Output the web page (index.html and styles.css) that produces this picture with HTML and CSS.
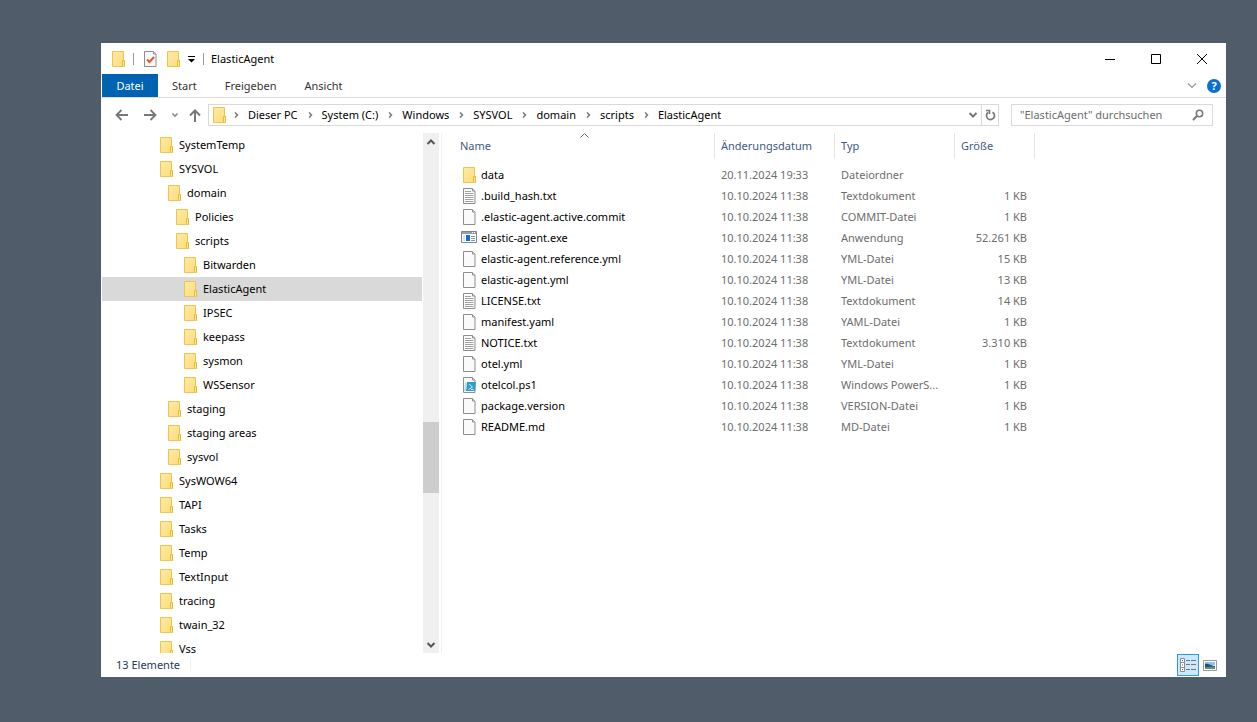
FILE: index.html
```
<!DOCTYPE html>
<html lang="de">
<head>
<meta charset="utf-8">
<title>ElasticAgent</title>
<link rel="stylesheet" href="styles.css">
</head>
<body>
<svg class="defs" aria-hidden="true">
  <linearGradient id="gold" x1="0" y1="0" x2="1" y2="1"><stop offset="0" stop-color="#ffe9a2"/><stop offset="1" stop-color="#fddc7c"/></linearGradient>
  <symbol id="folder" viewBox="0 0 13 16"><path d="M.5.5h11v9h1v6H.5z" fill="url(#gold)" stroke="#ecc54c"/><path d="M10.500 15V9.500h2v6" fill="#ffe596" stroke="#e6bb3a"/></symbol>
  <symbol id="page" viewBox="0 0 13 16"><path d="M.5.5h9l2.500 2.500v12.500H.5z" fill="#fafafa" stroke="#8e8e8e"/><path d="M9.500.5v2.500H12" fill="#e4e4e4" stroke="#8e8e8e"/></symbol>
  <symbol id="text" viewBox="0 0 13 16"><use href="#page"/><path d="M2 3.500h6M2 5.500h8.500M2 7.500h8.500M2 9.500h8.500M2 11.500h8.500M2 13.500h8.500" stroke="#a2a2a2"/></symbol>
  <symbol id="app" viewBox="0 0 16 13"><path d="M.5.5h15v11H.5z" fill="#fff" stroke="#7f858b"/><path d="M1 1h14v2H1z" fill="#9a9fa5"/><path d="M11 1.500h1m1 0h1" stroke="#fff"/><path d="M5 4h4v6H5z" fill="#0b6fd6"/><path d="M2 4h2v6H2z" fill="#dbe6f1"/><path d="M10 5.500h4M10 7.500h4M10 9.500h4" stroke="#929292"/></symbol>
  <symbol id="ps" viewBox="0 0 13 16"><use href="#page"/><path d="M4 5h9l-1 9H3z" fill="#2f9bd0"/><path d="M2 6h2l-1 8H1z" fill="#b9ddee"/><path d="m6 7 3.500 3-4 2.500M8 12.500h2.500" fill="none" stroke="#d8f0fb"/></symbol>
  <symbol id="check" viewBox="0 0 13 16"><use href="#page"/><path d="m3 8.500 2.500 2.500L10 6" fill="none" stroke="#e8562a" stroke-width="2"/></symbol>
  <symbol id="chev" viewBox="0 0 5 8"><path d="m1 1.500 2.500 2.500L1 6.500" fill="none" stroke="#777" stroke-width="1.500"/></symbol>
  <symbol id="down" viewBox="0 0 10 8"><path d="m1.500 2 3.500 3.500L8.500 2" fill="none" stroke="currentColor" stroke-width="2"/></symbol>
  <symbol id="left" viewBox="0 0 14 12"><path d="M1.500 6H13M6.500 1 1.500 6l5 5" fill="none" stroke="#777" stroke-width="1.800"/></symbol>
</svg>
<main class="window">
  <header class="titlebar">
    <svg class="ic"><use href="#folder"/></svg>
    <span class="bar"></span>
    <button class="plain" aria-label="Eigenschaften"><svg class="ic"><use href="#check"/></svg></button>
    <button class="plain" aria-label="Neuer Ordner"><svg class="ic"><use href="#folder"/></svg></button>
    <button class="plain custom" aria-label="Symbolleiste anpassen"><svg width="7" height="7" viewBox="0 0 7 7"><path d="M0 0h7v1H0zM0 3h7L3.500 6.500z"/></svg></button>
    <span class="bar"></span>
    <h1 class="title">ElasticAgent</h1>
    <div class="controls">
      <button class="plain" aria-label="Minimieren"><svg width="10" height="10"><path d="M0 5.500h10" stroke="#000"/></svg></button>
      <button class="plain" aria-label="Maximieren"><svg width="10" height="10"><path d="M.5.5h9v9h-9z" fill="none" stroke="#000"/></svg></button>
      <button class="plain" aria-label="Schließen"><svg width="10" height="10"><path d="m0 0 10 10m0-10-10 10" stroke="#000"/></svg></button>
    </div>
  </header>
  <nav class="tabs">
    <button class="tab active">Datei</button>
    <button class="tab">Start</button>
    <button class="tab">Freigeben</button>
    <button class="tab">Ansicht</button>
    <div class="help">
      <button class="plain" aria-label="Menüband erweitern"><svg width="10" height="6"><path d="m1 .5 4 4 4-4" fill="none" stroke="#999" stroke-width="1.200"/></svg></button>
      <button class="plain question" aria-label="Hilfe">?</button>
    </div>
  </nav>
  <div class="navbar">
    <div class="arrows">
      <button class="plain" aria-label="Zurück"><svg width="14" height="12"><use href="#left"/></svg></button>
      <button class="plain" aria-label="Vorwärts"><svg class="flip" width="14" height="12"><use href="#left"/></svg></button>
      <button class="plain recent" aria-label="Verlauf"><svg width="8" height="6"><use href="#down"/></svg></button>
      <button class="plain" aria-label="Nach oben"><svg width="12" height="13"><path d="M6 13V1.500M1 6.500l5-5 5 5" fill="none" stroke="#777" stroke-width="2"/></svg></button>
    </div>
    <div class="address">
      <svg class="ic"><use href="#folder"/></svg>
      <ol class="crumbs">
        <li><svg class="chev"><use href="#chev"/></svg><a href="#">Dieser PC</a></li>
        <li><svg class="chev"><use href="#chev"/></svg><a href="#">System (C:)</a></li>
        <li><svg class="chev"><use href="#chev"/></svg><a href="#">Windows</a></li>
        <li><svg class="chev"><use href="#chev"/></svg><a href="#">SYSVOL</a></li>
        <li><svg class="chev"><use href="#chev"/></svg><a href="#">domain</a></li>
        <li><svg class="chev"><use href="#chev"/></svg><a href="#">scripts</a></li>
        <li><svg class="chev"><use href="#chev"/></svg><a href="#">ElasticAgent</a></li>
      </ol>
      <button class="plain drop" aria-label="Vorherige Orte"><svg width="10" height="8"><use href="#down"/></svg></button>
      <button class="plain refresh" aria-label="Aktualisieren"><svg width="11" height="12"><path d="M7.500 3.200a4 4 0 1 1-4.500.3M1 1.500h3.500V5" fill="none" stroke="#777" stroke-width="1.700"/></svg></button>
    </div>
    <form class="search">
      <input class="query" type="search" aria-label="Suchen" placeholder="&quot;ElasticAgent&quot; durchsuchen">
      <button class="plain" type="button" aria-label="Suche starten"><svg width="12" height="12"><circle cx="7.500" cy="4.500" r="3.200" fill="none" stroke="#777" stroke-width="1.500"/><path d="M5.200 6.800 1 11" stroke="#777" stroke-width="2"/></svg></button>
    </form>
  </div>
  <div class="body">
    <ul class="tree">
      <li class="node l0"><svg class="ic"><use href="#folder"/></svg>SystemTemp</li>
      <li class="node l0"><svg class="ic"><use href="#folder"/></svg>SYSVOL</li>
      <li class="node l1"><svg class="ic"><use href="#folder"/></svg>domain</li>
      <li class="node l2"><svg class="ic"><use href="#folder"/></svg>Policies</li>
      <li class="node l2"><svg class="ic"><use href="#folder"/></svg>scripts</li>
      <li class="node l3"><svg class="ic"><use href="#folder"/></svg>Bitwarden</li>
      <li class="node l3 selected"><svg class="ic"><use href="#folder"/></svg>ElasticAgent</li>
      <li class="node l3"><svg class="ic"><use href="#folder"/></svg>IPSEC</li>
      <li class="node l3"><svg class="ic"><use href="#folder"/></svg>keepass</li>
      <li class="node l3"><svg class="ic"><use href="#folder"/></svg>sysmon</li>
      <li class="node l3"><svg class="ic"><use href="#folder"/></svg>WSSensor</li>
      <li class="node l1"><svg class="ic"><use href="#folder"/></svg>staging</li>
      <li class="node l1"><svg class="ic"><use href="#folder"/></svg>staging areas</li>
      <li class="node l1"><svg class="ic"><use href="#folder"/></svg>sysvol</li>
      <li class="node l0"><svg class="ic"><use href="#folder"/></svg>SysWOW64</li>
      <li class="node l0"><svg class="ic"><use href="#folder"/></svg>TAPI</li>
      <li class="node l0"><svg class="ic"><use href="#folder"/></svg>Tasks</li>
      <li class="node l0"><svg class="ic"><use href="#folder"/></svg>Temp</li>
      <li class="node l0"><svg class="ic"><use href="#folder"/></svg>TextInput</li>
      <li class="node l0"><svg class="ic"><use href="#folder"/></svg>tracing</li>
      <li class="node l0"><svg class="ic"><use href="#folder"/></svg>twain_32</li>
      <li class="node l0"><svg class="ic"><use href="#folder"/></svg>Vss</li>
    </ul>
    <div class="scrollbar">
      <button class="plain step" aria-label="Nach oben blättern"><svg class="turn" width="10" height="8"><use href="#down"/></svg></button>
      <div class="track"><div class="thumb"></div></div>
      <button class="plain step" aria-label="Nach unten blättern"><svg width="10" height="8"><use href="#down"/></svg></button>
    </div>
    <section class="files">
      <table class="list">
        <colgroup><col class="c-name"><col class="c-date"><col class="c-type"><col class="c-size"></colgroup>
        <thead><tr><th>Name<svg class="sort" width="9" height="5"><path d="m.5 4.500 4-4 4 4" fill="none" stroke="#666"/></svg></th><th>Änderungsdatum</th><th>Typ</th><th>Größe</th></tr></thead>
        <tbody>
          <tr><td><div class="file"><svg class="ic"><use href="#folder"/></svg>data</div></td><td>20.11.2024 19:33</td><td>Dateiordner</td><td></td></tr>
          <tr><td><div class="file"><svg class="ic"><use href="#text"/></svg>.build_hash.txt</div></td><td>10.10.2024 11:38</td><td>Textdokument</td><td>1 KB</td></tr>
          <tr><td><div class="file"><svg class="ic"><use href="#page"/></svg>.elastic-agent.active.commit</div></td><td>10.10.2024 11:38</td><td>COMMIT-Datei</td><td>1 KB</td></tr>
          <tr><td><div class="file"><svg class="ic wide"><use href="#app"/></svg>elastic-agent.exe</div></td><td>10.10.2024 11:38</td><td>Anwendung</td><td>52.261 KB</td></tr>
          <tr><td><div class="file"><svg class="ic"><use href="#page"/></svg>elastic-agent.reference.yml</div></td><td>10.10.2024 11:38</td><td>YML-Datei</td><td>15 KB</td></tr>
          <tr><td><div class="file"><svg class="ic"><use href="#page"/></svg>elastic-agent.yml</div></td><td>10.10.2024 11:38</td><td>YML-Datei</td><td>13 KB</td></tr>
          <tr><td><div class="file"><svg class="ic"><use href="#text"/></svg>LICENSE.txt</div></td><td>10.10.2024 11:38</td><td>Textdokument</td><td>14 KB</td></tr>
          <tr><td><div class="file"><svg class="ic"><use href="#page"/></svg>manifest.yaml</div></td><td>10.10.2024 11:38</td><td>YAML-Datei</td><td>1 KB</td></tr>
          <tr><td><div class="file"><svg class="ic"><use href="#text"/></svg>NOTICE.txt</div></td><td>10.10.2024 11:38</td><td>Textdokument</td><td>3.310 KB</td></tr>
          <tr><td><div class="file"><svg class="ic"><use href="#page"/></svg>otel.yml</div></td><td>10.10.2024 11:38</td><td>YML-Datei</td><td>1 KB</td></tr>
          <tr><td><div class="file"><svg class="ic"><use href="#ps"/></svg>otelcol.ps1</div></td><td>10.10.2024 11:38</td><td>Windows PowerS...</td><td>1 KB</td></tr>
          <tr><td><div class="file"><svg class="ic"><use href="#page"/></svg>package.version</div></td><td>10.10.2024 11:38</td><td>VERSION-Datei</td><td>1 KB</td></tr>
          <tr><td><div class="file"><svg class="ic"><use href="#page"/></svg>README.md</div></td><td>10.10.2024 11:38</td><td>MD-Datei</td><td>1 KB</td></tr>
        </tbody>
      </table>
    </section>
  </div>
  <footer class="status">
    <span>13 Elemente</span><span class="divider"></span>
    <button class="plain view on" aria-label="Details"><svg width="16" height="14"><path d="M.5.500h4v13h-4zM.5 4.500h4M.5 9.500h4" fill="#fff" stroke="#8d8d8d"/><path d="M2 2.500h1M2 7h1" stroke="#35699c"/><path d="M2 11.500h1" stroke="#c33"/><path d="M6 2.500h4m1 0h5M6 6.500h4m1 0h5M6 11.500h4m1 0h5" stroke="#777"/></svg></button>
    <button class="plain view" aria-label="Große Symbole"><svg width="14" height="11"><path d="M.5.5h13v10H.5z" fill="#fff" stroke="#999"/><path d="M2 2h10v3H2z" fill="#8cc3ee"/><path d="M2 4c3-1 4 1 10 2v2H2z" fill="#1d4f85"/><path d="M2 7c4 0 7-1 10 0v2H2z" fill="#63946f"/></svg></button>
  </footer>
</main>
</body>
</html>
```
FILE: styles.css
```
* { box-sizing: border-box; }
body {
  margin: 0;
  height: 100vh;
  padding: 43px 31px 45px 101px;
  display: flex;
  background: #515c6b;
  color: #000;
  font: 11px/16px "Segoe UI", "Noto Sans", sans-serif;
}
.defs { position: absolute; width: 0; height: 0; }
.window { flex: 1; min-width: 0; display: flex; flex-direction: column; background: #fff; border-left: 1px solid #fff; }
svg { flex: none; display: block; }
.plain { border: 0; padding: 0; background: none; color: #555; display: flex; align-items: center; justify-content: center; }
.ic { width: 13px; height: 16px; }
.wide { width: 16px; height: 13px; margin: 0 -1px 0 -2px; }
.titlebar { height: 31px; flex: none; display: flex; align-items: center; padding-left: 10px; gap: 10px; }
.bar { width: 1px; height: 12px; background: #999; margin: 0 0 0 -2px; }
.custom { margin: 2px 0 0 -2px; }
.title { margin: 0 0 0 -3px; font-size: 11px; font-weight: 400; }
.controls { margin-left: auto; display: flex; padding-right: 1px; }
.controls .plain { width: 46px; height: 30px; }
.tabs { display: flex; flex: none; height: 24px; border-bottom: 1px solid #dadbdc; }
.tab { border: 0; background: none; padding: 0 14px; color: #333; font: inherit; }
.tab.active { background: #0063b1; color: #fff; width: 56px; padding: 0; }
.help { margin-left: auto; display: flex; align-items: center; gap: 10px; padding-right: 5px; }
.question { width: 14px; height: 14px; border-radius: 50%; background: #0a6fce; color: #fff; font: bold 11px/14px "Noto Sans", sans-serif; }
.navbar { flex: none; display: flex; align-items: center; height: 35px; padding: 0 13px 1px; }
.arrows { display: flex; align-items: center; gap: 14px; width: 93px; }
.arrows .plain { flex: none; }
.arrows .recent { margin-right: -4px; color: #888; }
.flip { transform: scaleX(-1); }
.turn { transform: scaleY(-1); }
.address { flex: 1; min-width: 0; height: 22px; display: flex; align-items: center; border: 1px solid #d9d9d9; padding-left: 4px; }
.crumbs { flex: 1; min-width: 0; display: flex; list-style: none; margin: 0; padding: 0 0 0 8px; gap: 10px; }
.crumbs li { display: flex; align-items: center; gap: 9px; white-space: nowrap; }
.crumbs a { color: #000; text-decoration: none; }
.chev { width: 5px; height: 8px; }
.drop { width: 17px; color: #777; }
.refresh { width: 17px; align-self: stretch; border-left: 1px solid #d9d9d9; }
.search { width: 202px; height: 22px; margin: 0 0 0 12px; border: 1px solid #d9d9d9; display: flex; align-items: center; padding: 0 8px; }
.query { flex: 1; min-width: 0; border: 0; padding: 0; outline: 0; background: none; font: inherit; color: #000; }
.query::placeholder { color: #6d6d6d; opacity: 1; }
.body { flex: 1; min-height: 0; display: flex; }
.tree { width: 320px; flex: none; list-style: none; margin: 0; padding: 0; overflow: hidden; }
.node { height: 24px; display: flex; align-items: center; gap: 6px; }
.l0 { padding-left: 58px; }
.l1 { padding-left: 66px; }
.l2 { padding-left: 74px; }
.l3 { padding-left: 82px; }
.selected { background: #d9d9d9; }
.scrollbar { width: 16px; margin-left: 1px; flex: none; display: flex; flex-direction: column; background: #f0f0f0; }
.step { height: 17px; flex: none; }
.track { flex: 1; display: grid; grid-template-rows: 272fr 71fr 143fr; }
.thumb { grid-row: 2; background: #cdcdcd; }
.files { flex: 1; min-width: 0; margin-left: 2px; border-left: 1px solid #f0f0f0; padding-left: 12px; overflow: hidden; }
.list { table-layout: fixed; width: 581px; border-collapse: separate; border-spacing: 0; }
.c-name { width: 261px; }
.c-date, .c-type { width: 120px; }
.c-size { width: 80px; }
.list th { position: relative; height: 26px; padding: 0 6px; text-align: left; font-weight: 400; color: #43597f; border-right: 1px solid #e5e5e5; }
.sort { position: absolute; top: 0; left: calc(50% - 4px); }
.list tbody::before { content: ""; display: block; height: 5px; }
.list td { height: 21px; padding: 0 6px; color: #6d6d6d; white-space: nowrap; }
.list td:last-child { text-align: right; padding-right: 8px; }
.file { display: flex; align-items: center; gap: 5px; color: #000; padding-left: 3px; }
.status { flex: none; height: 24px; display: flex; align-items: center; padding: 0 5px 0 14px; color: #1e395b; }
.divider { width: 1px; height: 12px; margin: 0 auto 0 10px; background: #f0f0f0; }
.view { width: 22px; height: 22px; }
.view.on { background: #cce8ff; border: 1px solid #2a9fdc; }
```
